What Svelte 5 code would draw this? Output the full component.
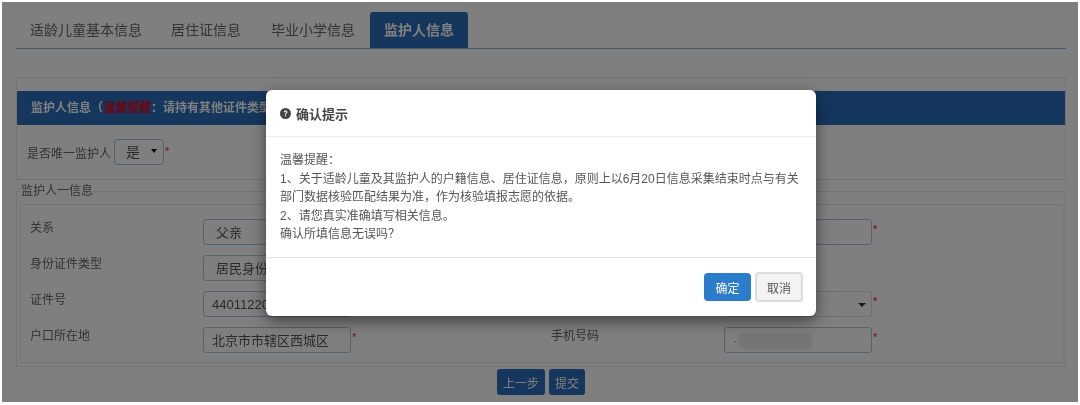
<script>
	const tabs = ['适龄儿童基本信息', '居住证信息', '毕业小学信息', '监护人信息'];
	const rows = [
		{ left: '关系', value: '父亲', sel: true, star: false, right: '', rightKind: 'input' },
		{ left: '身份证件类型', value: '居民身份', sel: true, star: false, right: '', rightKind: 'none' },
		{ left: '证件号', value: '44011220', sel: false, star: false, right: '', rightKind: 'select' },
		{ left: '户口所在地', value: '北京市市辖区西城区', sel: false, star: true, right: '手机号码', rightKind: 'phone' }
	];
</script>

<div class="page">
	<ul class="tabs">
		{#each tabs as tab, i}
			<li class:active={i === 3}>{tab}</li>
		{/each}
	</ul>

	<section class="panel">
		<h3 class="panel-head">
			监护人信息（<span class="warn">温馨提醒</span>：请持有其他证件类型
		</h3>
		<div class="only">
			<span>是否唯一监护人</span>
			<div class="pick">是<i class="arrow"></i></div>
			<em>*</em>
		</div>
	</section>

	<fieldset class="guardian">
		<legend>监护人一信息</legend>
		<div class="inner">
			{#each rows as row}
				<div class="row">
					<span class="name">{row.left}</span>
					<div class="field" class:sel={row.sel}>{row.value}</div>
					<em>{row.star ? '*' : ''}</em>
					<span class="name right">{row.right}</span>
					{#if row.rightKind === 'input'}
						<div class="field"></div>
						<em>*</em>
					{:else if row.rightKind === 'select'}
						<div class="field plain"><i class="arrow"></i></div>
						<em>*</em>
					{:else if row.rightKind === 'phone'}
						<div class="field">
							<span class="dot">·</span>
							<span class="smudge"></span>
						</div>
						<em>*</em>
					{/if}
				</div>
			{/each}
		</div>
	</fieldset>

	<div class="steps">
		<button>上一步</button>
		<button>提交</button>
	</div>
</div>

<div class="backdrop"></div>

<div class="modal">
	<header>
		<svg viewBox="0 0 16 16" width="11" height="11">
			<circle cx="8" cy="8" r="8" fill="#444" />
			<path d="M5.3 6.2c.1-1.600 1.300-2.500 2.800-2.500 1.600 0 2.700 1 2.700 2.300 0 1.100-.6 1.600-1.300 2.100-.5.4-.7.6-.7 1.200H7.200c0-1.100.4-1.600 1.100-2.100.5-.4.800-.6.800-1.100 0-.5-.4-.9-1-.9-.7 0-1.100.4-1.200 1z" fill="#fff" />
			<rect x="7.100" y="10.300" width="1.800" height="1.800" fill="#fff" />
		</svg>
		<strong>确认提示</strong>
	</header>
	<div class="body">
		<p>温馨提醒：</p>
		<p>1、关于适龄儿童及其监护人的户籍信息、居住证信息，原则上以6月20日信息采集结束时点与有关</p>
		<p>部门数据核验匹配结果为准，作为核验填报志愿的依据。</p>
		<p>2、请您真实准确填写相关信息。</p>
		<p>确认所填信息无误吗？</p>
	</div>
	<footer>
		<button class="ok">确定</button>
		<button class="cancel">取消</button>
	</footer>
</div>

<style>
	:global(body) {
		margin: 0;
		background: #fff;
		font-family: 'Liberation Sans', 'Noto Sans CJK SC', sans-serif;
		color: #333;
	}
	:global(#app) {
		width: 1080px;
		height: 405px;
		position: relative;
		overflow: hidden;
		filter: blur(0.45px);
	}
	.page {
		padding: 12px 14px 0 16px;
		box-sizing: border-box;
		height: 405px;
		font-size: 12px;
	}

	.tabs {
		display: flex;
		list-style: none;
		margin: 0 0 28px;
		padding: 0;
		height: 36px;
		border-bottom: 1px solid #8cb4de;
	}
	.tabs li {
		padding: 0 14px;
		line-height: 36px;
		font-size: 14px;
		color: #666;
		margin-right: 1px;
	}
	.tabs li:nth-child(2) {
		margin-right: 2px;
	}
	.tabs li.active {
		background: #2a6fbc;
		color: #fff;
		font-weight: 700;
		border-radius: 3px 3px 0 0;
	}

	.panel {
		border: 1px solid #e6e6e6;
		height: 103px;
		box-sizing: border-box;
		padding-top: 13px;
	}
	.panel-head {
		margin: 0;
		background: #2a6fbc;
		color: #fff;
		font-size: 12px;
		height: 34px;
		line-height: 34px;
		padding-left: 14px;
		font-weight: 700;
	}
	.warn {
		color: #f00010;
	}
	.only {
		display: flex;
		align-items: center;
		padding: 14px 0 0 10px;
		font-size: 12px;
		color: #666;
	}
	.pick {
		width: 50px;
		height: 26px;
		box-sizing: border-box;
		margin-left: 3px;
		border: 1px solid #a8c8ea;
		border-radius: 3px;
		padding-left: 11px;
		font-size: 14px;
		line-height: 24px;
		color: #555;
		position: relative;
	}
	.arrow {
		position: absolute;
		right: 6px;
		top: 9px;
		border: 3px solid transparent;
		border-top: 4px solid #111;
		border-bottom: 0;
	}
	em {
		color: #e8202a;
		font-style: normal;
		font-size: 11px;
		line-height: 1;
		margin-left: 1px;
		width: 7px;
		flex: none;
		margin-top: 5px;
	}
	.only em {
		margin-top: -2px;
	}

	.guardian {
		margin: 3px 0 0;
		padding: 5px 2px 0 3px;
		border: 1px solid #e6e6e6;
		height: 184px;
		box-sizing: border-box;
		min-width: 0;
	}
	.guardian legend {
		padding: 0;
		margin-left: 1px;
		font-size: 12px;
		line-height: 16px;
		color: #666;
	}
	.inner {
		border: 1px solid #e6e6e6;
		padding: 14px 0 0 9px;
		height: 159px;
		box-sizing: border-box;
	}
	.row {
		display: flex;
		align-items: flex-start;
		height: 26px;
		margin-bottom: 10px;
	}
	.name {
		width: 173px;
		flex: none;
		font-size: 12px;
		line-height: 18px;
		color: #666;
	}
	.name.right {
		margin-left: 192px;
	}
	.field {
		width: 148px;
		height: 26px;
		box-sizing: border-box;
		flex: none;
		border: 1px solid #a8c8ea;
		border-radius: 3px;
		padding-left: 8px;
		line-height: 25px;
		font-size: 13px;
		color: #555;
		background: #fff;
		position: relative;
		white-space: nowrap;
		overflow: hidden;
	}
	.field.sel {
		padding-left: 12px;
	}
	.field.plain {
		border-color: #ddd;
	}
	.field.plain .arrow {
		right: 5px;
		top: 11px;
		border-width: 4px 4px 0;
		border-top-color: #333;
	}
	.dot {
		color: #c08020;
	}
	.smudge {
		position: absolute;
		left: 13px;
		top: 5px;
		width: 74px;
		height: 16px;
		background: #eaeaea;
		border-radius: 6px 0 0 6px;
		filter: blur(1.5px);
	}

	.steps {
		display: flex;
		justify-content: center;
		gap: 4px;
		padding-top: 2px;
	}
	.steps button {
		height: 26px;
		padding: 0 6px;
		border: 0;
		border-radius: 3px;
		background: #2a6fbc;
		color: #fff;
		font: inherit;
		font-size: 12px;
	}

	.backdrop {
		position: absolute;
		left: 2px;
		top: 2px;
		width: 1076px;
		height: 400px;
		background: rgba(0, 0, 0, 0.5);
	}

	.modal {
		position: absolute;
		left: 266px;
		top: 90px;
		width: 550px;
		height: 226px;
		background: #fff;
		border-radius: 6px;
		box-shadow: 0 5px 15px rgba(0, 0, 0, 0.5);
		display: flex;
		flex-direction: column;
	}
	.modal header {
		height: 47px;
		box-sizing: border-box;
		border-bottom: 1px solid #eee;
		display: flex;
		align-items: center;
		gap: 5px;
		padding-left: 14px;
	}
	.modal strong {
		font-size: 13px;
		color: #444;
	}
	.body {
		flex: 1;
		padding: 14px 14px 0;
		font-size: 12px;
		line-height: 18.5px;
		color: #555;
	}
	.body p {
		margin: 0;
		white-space: nowrap;
	}
	.modal footer {
		height: 59px;
		box-sizing: border-box;
		border-top: 1px solid #e5e5e5;
		display: flex;
		justify-content: flex-end;
		align-items: center;
		gap: 4px;
		padding-right: 13px;
	}
	.modal footer button {
		border-radius: 4px;
		font: inherit;
		font-size: 12px;
		padding: 0;
	}
	.ok {
		width: 47px;
		height: 28px;
		background: #2b7dcc;
		border: 0;
		color: #fff;
	}
	.cancel {
		width: 48px;
		height: 30px;
		background: #f3f3f3;
		border: 2px solid #dcdcdc;
		color: #555;
	}
</style>
